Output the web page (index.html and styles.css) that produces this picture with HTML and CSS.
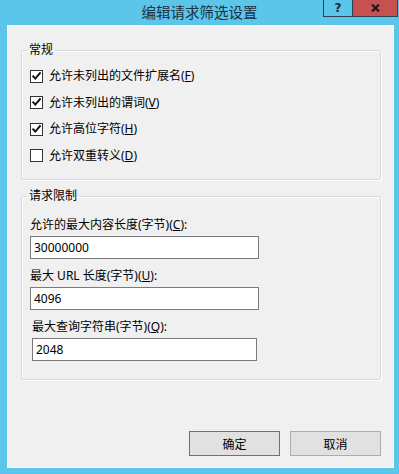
FILE: index.html
```html
<!DOCTYPE html>
<html lang="zh-CN">
<head>
<meta charset="utf-8">
<title>编辑请求筛选设置</title>
<link rel="stylesheet" href="styles.css">
</head>
<body>
<div class="window">
  <div class="titlebar">
    <div class="title">编辑请求筛选设置</div>
    <div class="caption-btns">
      <span class="cap help">?</span>
      <span class="cap close"><svg width="9" height="8" viewBox="0 0 9 8"><path d="M1 0.5 L8 7.5 M8 0.5 L1 7.5" stroke="#1b1b1b" stroke-width="2.2" fill="none"/></svg></span>
    </div>
  </div>
  <div class="client">
    <fieldset class="group g1">
      <legend>常规</legend>
      <div class="check-row"><span class="cb"><svg width="11" height="11" viewBox="0 0 11 11"><path d="M1.6 4.6 L4.3 7.6 L9.6 1.4" stroke="#111" stroke-width="2" fill="none"/></svg></span><span>允许未列出的文件扩展名(<u>F</u>)</span></div>
      <div class="check-row"><span class="cb"><svg width="11" height="11" viewBox="0 0 11 11"><path d="M1.6 4.6 L4.3 7.6 L9.6 1.4" stroke="#111" stroke-width="2" fill="none"/></svg></span><span>允许未列出的谓词(<u>V</u>)</span></div>
      <div class="check-row"><span class="cb"><svg width="11" height="11" viewBox="0 0 11 11"><path d="M1.6 4.6 L4.3 7.6 L9.6 1.4" stroke="#111" stroke-width="2" fill="none"/></svg></span><span>允许高位字符(<u>H</u>)</span></div>
      <div class="check-row"><span class="cb"></span><span>允许双重转义(<u>D</u>)</span></div>
    </fieldset>
    <fieldset class="group g2">
      <legend>请求限制</legend>
      <div class="field"><label>允许的最大内容长度(字节)(<u>C</u>):</label><input class="txt" type="text" value="30000000"></div>
      <div class="field"><label>最大 URL 长度(字节)(<u>U</u>):</label><input class="txt" type="text" value="4096"></div>
      <div class="field shifted"><label>最大查询字符串(字节)(<u>Q</u>):</label><input class="txt" type="text" value="2048"></div>
    </fieldset>
    <div class="actions">
      <button class="btn default" type="button">确定</button>
      <button class="btn" type="button">取消</button>
    </div>
  </div>
</div>
</body>
</html>
```
FILE: styles.css
```css
html, body {
  margin: 0;
  padding: 0;
  background: #5bc6ea;
}
body {
  font-family: "Noto Sans", "Noto Sans CJK SC", sans-serif;
  font-size: 12px;
  line-height: 16px;
  color: #000;
}
.window {
  width: 399px;
  height: 474px;
  box-sizing: border-box;
  background: #5bc6ea;
  padding: 0 5px 6px 7px;
  display: flex;
  flex-direction: column;
}
.titlebar {
  height: 25px;
  flex: none;
  margin: 0 -5px 0 -7px;
  display: grid;
  grid-template-columns: 1fr auto 1fr;
}
.title {
  grid-column: 2;
  font-family: "Noto Sans CJK SC", sans-serif;
  font-size: 14.5px;
  line-height: 23px;
  color: #1c3040;
}
.caption-btns {
  grid-column: 3;
  justify-self: end;
  align-self: start;
  display: flex;
  margin-right: 1px;
}
.cap {
  height: 17px;
  box-sizing: border-box;
  border-bottom: 1px solid #2d4352;
  border-left: 1px solid #2d4352;
  display: flex;
  align-items: center;
  justify-content: center;
}
.help {
  width: 29px;
  background: #5bc6ea;
  font-family: "DejaVu Sans", sans-serif;
  font-weight: bold;
  font-size: 12px;
  color: #1b2a36;
  padding-bottom: 1px;
}
.close {
  width: 46px;
  background: #c75050;
  border-right: 1px solid #2d4352;
}
.client {
  flex: 1;
  background: #f0f0f0;
  border: 1px solid #f9fbfc;
  display: flex;
  flex-direction: column;
}
.group {
  margin: 0 0 0 13px;
  width: 360px;
  box-sizing: border-box;
  border: 1px solid #d9d9d9;
  border-radius: 2px;
  box-shadow: 1px 1px 0 #fff, inset 1px 1px 0 #fff;
  padding: 0 8px;
  min-width: 0;
}
.group legend {
  padding: 0 2px 2px;
  margin-left: -3px;
  line-height: 16px;
  font-family: "Noto Sans CJK SC", sans-serif;
}
.g1 {
  margin-top: 15px;
  padding-top: 4px;
  padding-bottom: 10px;
}
.g2 {
  margin-top: 7px;
  padding-top: 12px;
  padding-bottom: 18px;
}
.check-row {
  height: 26.5px;
  display: flex;
  align-items: center;
  gap: 6px;
}
.cb {
  width: 13px;
  height: 13px;
  box-sizing: border-box;
  border: 1px solid #333;
  background: #fff;
  display: flex;
  flex: none;
}
.cb svg {
  display: block;
}
u {
  text-decoration: underline;
  text-underline-offset: 1px;
}
.field {
  display: flex;
  flex-direction: column;
  align-items: flex-start;
}
.field + .field {
  margin-top: 9px;
}
.field label {
  margin-bottom: 3px;
}
.txt {
  width: 229px;
  height: 23px;
  box-sizing: border-box;
  border: 1px solid #7a7a7a;
  background: #fff;
  margin: 0;
  padding: 0 3px;
  font-family: "Noto Sans", "Noto Sans CJK SC", sans-serif;
  font-size: 12px;
  color: #000;
  outline: none;
}
.shifted {
  padding-left: 2px;
}
.shifted .txt {
  width: 225px;
}
.actions {
  margin: 51px 0 0 13px;
  width: 360px;
  display: flex;
  justify-content: flex-end;
  gap: 10px;
}
.btn {
  width: 91px;
  height: 25px;
  box-sizing: border-box;
  border: 1px solid #adadad;
  background: #e1e1e1;
  font-family: "Noto Sans CJK SC", sans-serif;
  font-size: 12px;
  color: #000;
  padding: 0;
  margin: 0;
}
.btn.default {
  border-color: #3c7fb1;
}
```
